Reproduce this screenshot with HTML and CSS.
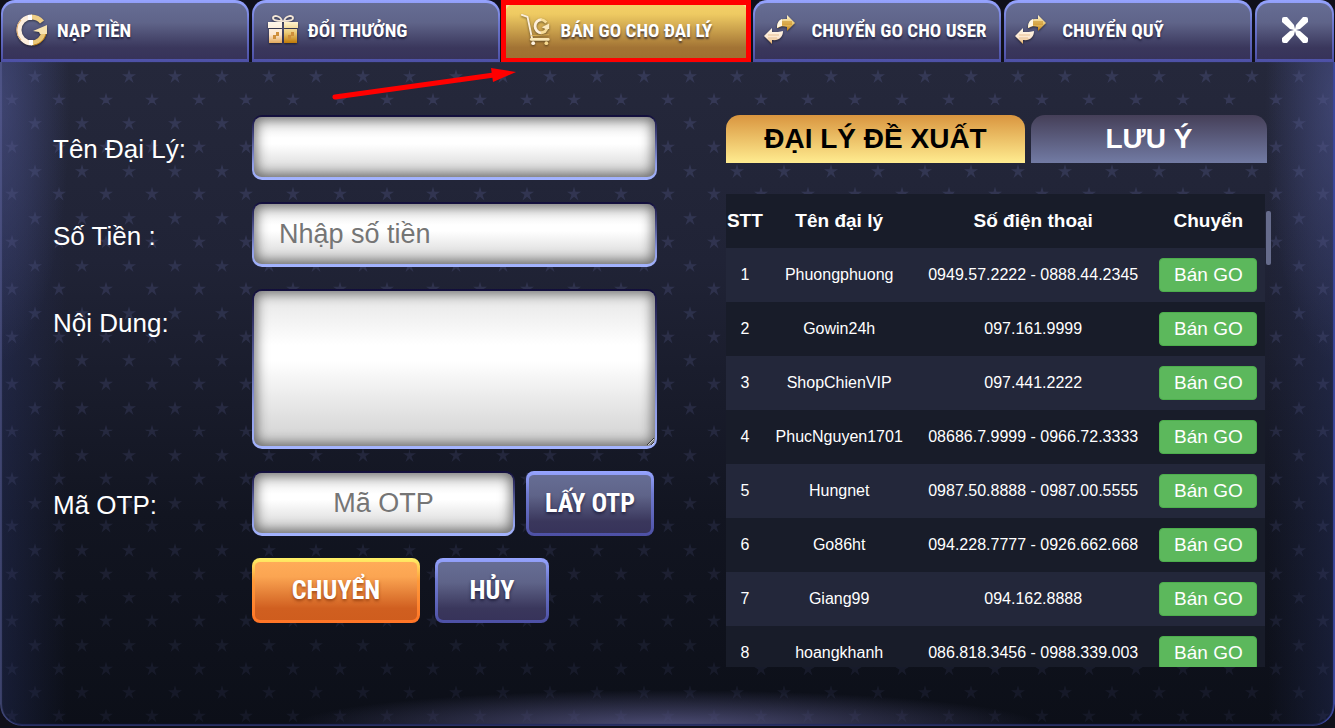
FILE: index.html
```html
<!DOCTYPE html>
<html lang="vi">
<head>
    <meta charset="UTF-8">
    <meta name="viewport" content="width=device-width, initial-scale=1.0">
    <title>Bán GO cho đại lý</title>
    <link rel="stylesheet" href="styles.css">
</head>
<body>
    <!-- shared gradients and icons -->
    <svg class="defs" width="0" height="0" aria-hidden="true">
        <defs>
            <linearGradient id="gold-right" x1="0" y1="0" x2="0" y2="1">
                <stop offset="0" stop-color="#fff3cf"/>
                <stop offset="0.5" stop-color="#eccb78"/>
                <stop offset="1" stop-color="#c07a08"/>
            </linearGradient>
            <linearGradient id="gold-left" x1="0" y1="0" x2="0" y2="1">
                <stop offset="0" stop-color="#fff8ea"/>
                <stop offset="0.6" stop-color="#fbe6cf"/>
                <stop offset="1" stop-color="#e2a95c"/>
            </linearGradient>
        </defs>
        <symbol id="icon-exchange" viewBox="0 0 32 30">
            <path fill="url(#gold-right)" d="M23 0l8 8-8 8v-4c-4-1-6-1-9 1h-1c0-5 2-9 7-9h3z"/>
            <path d="M18 7h10M18 9h10" stroke="#c58a22" stroke-width="1" fill="none"/>
            <path d="M18 4c-3 1-5 4-5 9 2-1 3-2 5-2z" fill="#fff8e6"/>
            <path fill="url(#gold-left)" d="M8 13L0 21l8 8v-4c7 1 11-3 11-9-3 1-7 1-11 1z"/>
            <path d="M4 20h11M4 23h9" stroke="#e6bf94" stroke-width="1" fill="none"/>
        </symbol>
    </svg>

    <nav class="tabs">
        <a class="tab" href="#nap-tien">
            <svg class="icon" viewBox="0 0 32 32">
                <path d="M16 29a13 13 0 0 1 0-26" stroke="#fdeedd" stroke-width="5" fill="none"/>
                <path d="M5 6a14 14 0 0 0 0 20" stroke="#dca76a" stroke-width="1" fill="none"/>
                <path d="M15 3c4 0 8 1 11 5" stroke="#f0cf86" stroke-width="5" fill="none"/>
                <path d="M28 18c-1 6-6 11-13 11" stroke="#eac778" stroke-width="5" fill="none"/>
                <path d="M30 20c-2 6-6 10-12 11" stroke="#b97a10" stroke-width="1" fill="none"/>
                <path fill="#f8e3b0" d="M17 17l14-6v9h-7l-1-2z"/>
                <path fill="#fff" d="M12 1h4v5h-4zM13 26h4v5h-4z"/>
            </svg>
            <span>NẠP TIỀN</span>
        </a>
        <a class="tab" href="#doi-thuong">
            <svg class="icon" viewBox="0 0 32 30">
                <path d="M15 6C13 0 6 0 6 3s5 3 9 3zM17 6c2-6 9-6 9-3s-5 3-9 3z" fill="none" stroke="#f2e5d6" stroke-width="2"/>
                <path fill="url(#gold-left)" d="M1 7h14v6H1zM2 14h13v14H2z"/>
                <path fill="url(#gold-right)" d="M17 7h14v6H17zM17 14h13v14H17z"/>
                <path d="M6 24v-4h3v-3h3v4H9v3zM21 24v-4h3v-3h3v4h-3v3z" fill="#cf8f3b"/>
            </svg>
            <span>ĐỔI THƯỞNG</span>
        </a>
        <a class="tab active" href="#ban-go">
            <svg class="icon" viewBox="0 0 32 34">
                <path d="M1 1l6 2 5 24" fill="none" stroke="#fbeedb" stroke-width="2" stroke-linecap="round" stroke-linejoin="round"/>
                <path d="M11 27h18" fill="none" stroke="#fbe7b4" stroke-width="3" stroke-linecap="round"/>
                <path d="M22 20a7 7 0 0 1 0-14" fill="none" stroke="#fff0dc" stroke-width="3"/>
                <path d="M21 6c3 0 4 1 6 3M28 14c-1 4-3 6-7 6" fill="none" stroke="#f8dd98" stroke-width="3"/>
                <path d="M22 14l8-4v6h-4z" fill="#fbe9bd"/>
                <path d="M11 23l19-1" stroke="#e0b356" stroke-width="1"/>
                <circle cx="13" cy="31" r="2" fill="#fff4e2"/>
                <circle cx="27" cy="31" r="2" fill="#f6d98e"/>
            </svg>
            <span>BÁN GO CHO ĐẠI LÝ</span>
        </a>
        <a class="tab wide" href="#chuyen-user">
            <svg class="icon"><use href="#icon-exchange"/></svg>
            <span>CHUYỂN GO CHO USER</span>
        </a>
        <a class="tab wide" href="#chuyen-quy">
            <svg class="icon"><use href="#icon-exchange"/></svg>
            <span>CHUYỂN QUỸ</span>
        </a>
        <button class="tab close" type="button" aria-label="Đóng">
            <svg viewBox="0 0 28 28" width="28" height="28">
                <path fill="#fff" d="M1 3q0-2 2-2h3l7 8 1 4 1-4 7-8h3q2 0 2 2v3l-8 7-4 1 4 1 8 7v3q0 2-2 2h-3l-7-8-1-4-1 4-7 8H3q-2 0-2-2v-3l8-7 4-1-4-1-8-7z"/>
            </svg>
        </button>
    </nav>

    <main class="panel">
        <form class="form">
            <label for="agent">Tên Đại Lý:</label>
            <input class="field" type="text" id="agent">

            <label for="amount">Số Tiền :</label>
            <input class="field" type="text" id="amount" placeholder="Nhập số tiền">

            <label for="content">Nội Dung:</label>
            <textarea class="field" id="content"></textarea>

            <label for="otp">Mã OTP:</label>
            <div class="otp-row">
                <input class="field otp" type="text" id="otp" placeholder="Mã OTP">
                <button class="btn" type="button">LẤY OTP</button>
            </div>

            <div class="actions">
                <button class="btn btn-submit" type="submit">CHUYỂN</button>
                <button class="btn btn-cancel" type="reset">HỦY</button>
            </div>
        </form>

        <section class="agents">
            <div class="agent-tabs">
                <button class="agent-tab active" type="button">ĐẠI LÝ ĐỀ XUẤT</button>
                <button class="agent-tab" type="button">LƯU Ý</button>
            </div>
            <div class="agent-list">
                <div class="table-wrap">
                    <table>
                        <colgroup>
                            <col class="col-stt">
                            <col class="col-name">
                            <col class="col-phone">
                            <col class="col-action">
                        </colgroup>
                        <thead>
                            <tr><th>STT</th><th>Tên đại lý</th><th>Số điện thoại</th><th>Chuyển</th></tr>
                        </thead>
                        <tbody>
                            <tr><td>1</td><td>Phuongphuong</td><td>0949.57.2222 - 0888.44.2345</td><td><button class="sell" type="button">Bán GO</button></td></tr>
                            <tr><td>2</td><td>Gowin24h</td><td>097.161.9999</td><td><button class="sell" type="button">Bán GO</button></td></tr>
                            <tr><td>3</td><td>ShopChienVIP</td><td>097.441.2222</td><td><button class="sell" type="button">Bán GO</button></td></tr>
                            <tr><td>4</td><td>PhucNguyen1701</td><td>08686.7.9999 - 0966.72.3333</td><td><button class="sell" type="button">Bán GO</button></td></tr>
                            <tr><td>5</td><td>Hungnet</td><td>0987.50.8888 - 0987.00.5555</td><td><button class="sell" type="button">Bán GO</button></td></tr>
                            <tr><td>6</td><td>Go86ht</td><td>094.228.7777 - 0926.662.668</td><td><button class="sell" type="button">Bán GO</button></td></tr>
                            <tr><td>7</td><td>Giang99</td><td>094.162.8888</td><td><button class="sell" type="button">Bán GO</button></td></tr>
                            <tr><td>8</td><td>hoangkhanh</td><td>086.818.3456 - 0988.339.003</td><td><button class="sell" type="button">Bán GO</button></td></tr>
                        </tbody>
                    </table>
                </div>
                <div class="scroll-thumb"></div>
            </div>
        </section>
    </main>

    <!-- arrow pointing at the active tab -->
    <svg class="arrow" viewBox="0 0 184 36" width="184" height="36" aria-hidden="true">
        <path d="M3 31L162 9" stroke="#f00" stroke-width="5" stroke-linecap="round"/>
        <path d="M159 2l25 4-23 10z" fill="#f00"/>
    </svg>
</body>
</html>
```
FILE: styles.css
```css
:root {
    --font: "Liberation Sans", Arial, sans-serif;
    --font-narrow: "Liberation Sans Narrow", "Arial Narrow", "Roboto Condensed", "Liberation Sans", sans-serif;
    --steel: linear-gradient(#666d94, #5f6489 35%, #3a375c 80%, #37335a);
    --steel-edge: linear-gradient(#96a4ff, #6f7ad0 35%, #4d50a5);
}

* {
    box-sizing: border-box;
}

body {
    margin: 0;
    min-height: 100vh;
    display: flex;
    flex-direction: column;
    position: relative;
    padding-bottom: 2px;
    background: #10101a;
    color: #fff;
    font-family: var(--font);
}

button {
    cursor: pointer;
}

.defs {
    position: absolute;
}

/* top tabs */
.tabs {
    display: grid;
    grid-template-columns: repeat(5, minmax(0, 1fr)) 79px;
    gap: 3px;
    padding: 0 1px;
}

.tab {
    height: 62px;
    display: flex;
    align-items: center;
    gap: 9px;
    padding: 0 0 2px 13px;
    border: solid transparent;
    border-width: 3px 2px;
    border-radius: 14px 14px 0 0;
    background: var(--steel) padding-box, var(--steel-edge) border-box;
    color: #fff;
    font: bold 19px var(--font-narrow);
    text-decoration: none;
    text-shadow: 0 2px 2px rgba(20, 18, 45, 0.7);
    white-space: nowrap;
}

.tab .icon {
    flex: none;
    width: 32px;
    height: 32px;
    filter: drop-shadow(0 1px 1px rgba(0, 0, 0, 0.5));
}

.tab.wide {
    padding-left: 9px;
    gap: 15px;
}

.tab.active {
    position: relative;
    padding-left: 15px;
    background: linear-gradient(#f4d168, #eeca62 20%, #a27334 80%, #9f7031) padding-box, linear-gradient(#ffe9a0, #c7934a) border-box;
}

.tab.active::after {
    content: "";
    position: absolute;
    inset: -3px -3px -4px -4px;
    border: 5px solid #f00;
}

.tab.close {
    justify-content: center;
    padding: 0 0 2px;
}

/* panel */
.panel {
    flex: 1;
    position: relative;
    display: grid;
    grid-template-columns: 604fr 545fr;
    gap: 69px;
    align-items: start;
    padding: 53px 64px 32px 53px;
    border-radius: 0 0 22px 22px;
    background:
        radial-gradient(ellipse 28% 36px at 50% 100%, rgba(120, 118, 180, 0.6), transparent),
        radial-gradient(ellipse 70px 260px at 0 40px, rgba(80, 86, 140, 0.55), transparent),
        radial-gradient(ellipse 70px 260px at 100% 40px, rgba(80, 86, 140, 0.55), transparent),
        linear-gradient(90deg, rgba(48, 60, 120, 0.3), transparent 5%, transparent 95%, rgba(48, 60, 120, 0.3)),
        linear-gradient(#25283b, #202336 30%, #121521 68%, #0c0f18);
    box-shadow: inset 2px 0 1px rgba(98, 104, 160, 0.5), inset -2px 0 1px #3c479c, inset 0 -2px 1px #252c5e;
}

/* star pattern */
.panel::before {
    content: "";
    position: absolute;
    inset: 0;
    border-radius: inherit;
    background-image: url("data:image/svg+xml,%3Csvg xmlns='http://www.w3.org/2000/svg' viewBox='0 0 94 94' preserveAspectRatio='none'%3E%3Cpath fill='%23565b8c' d='M70 14l3 10h11l-9 6 4 11-9-7-9 7 4-11-9-6h11zM24 60l3 10h11l-9 6 4 11-9-7-9 7 4-11-9-6h11z'/%3E%3C/svg%3E");
    background-size: calc(100% / 28.5) calc(100% / 14);
    -webkit-mask-image: linear-gradient(rgba(0, 0, 0, 0.34), rgba(0, 0, 0, 0.28) 40%, rgba(0, 0, 0, 0.12));
    mask-image: linear-gradient(rgba(0, 0, 0, 0.34), rgba(0, 0, 0, 0.28) 40%, rgba(0, 0, 0, 0.12));
}

.form,
.agents {
    position: relative;
    min-width: 0;
}

/* transfer form */
.form {
    display: grid;
    grid-template-columns: 199px 1fr;
    row-gap: 22px;
}

.form label {
    padding-top: 18px;
    font-size: 26px;
    line-height: 32px;
}

.field {
    display: block;
    width: 100%;
    height: 65px;
    padding: 0 25px;
    border: solid transparent;
    border-width: 2px 2px 3px;
    border-radius: 10px;
    background: linear-gradient(#e4e4e4, #fff 35%, #fff 45%, #d0d0d0) padding-box, linear-gradient(#110d3a, #8f9ce6 75%, #a4b4ff) border-box;
    box-shadow: inset 0 0 12px 3px rgba(0, 0, 0, 0.5);
    color: #333;
    font: 27px var(--font);
}

.field::placeholder {
    color: #757575;
}

textarea.field {
    height: 160px;
    padding: 16px 25px;
    resize: both;
}

.otp-row {
    display: flex;
    gap: 11px;
    padding-right: 3px;
}

.otp {
    flex: 1;
    min-width: 0;
    text-align: center;
}

.btn {
    flex: none;
    width: 128px;
    height: 65px;
    padding: 0 0 2px;
    border: solid transparent;
    border-width: 4px 3px 3px;
    border-radius: 8px;
    background: var(--steel) padding-box, var(--steel-edge) border-box;
    color: #fff;
    font: bold 26px var(--font-narrow);
    text-shadow: 0 2px 3px rgba(20, 18, 45, 0.7);
}

.actions {
    grid-column: 2;
    display: flex;
    gap: 15px;
}

.btn-submit {
    width: 168px;
    background: linear-gradient(#ffac58, #fba552 25%, #d05f20 80%, #cf5d1e) padding-box, linear-gradient(#fff268, #ff9a3a 35%, #ff7426) border-box;
    text-shadow: 0 2px 3px rgba(120, 40, 0, 0.6);
}

.btn-cancel {
    width: 114px;
}

/* agent list */
.agent-tabs {
    display: flex;
    gap: 6px;
    padding-right: 4px;
    margin-bottom: 31px;
}

.agent-tab {
    flex: 236;
    height: 48px;
    padding: 0;
    border: 0;
    border-radius: 14px 14px 0 0;
    background: linear-gradient(#453f58, #727ba4);
    color: #fff;
    font: bold 28px var(--font);
}

.agent-tab.active {
    flex: 299;
    background: linear-gradient(#d9953f, #ffec90);
    color: #000;
}

.agent-list {
    display: flex;
    gap: 1px;
}

.table-wrap {
    flex: 1;
    max-height: 473px;
    overflow: hidden;
}

table {
    width: 100%;
    table-layout: fixed;
    border-collapse: collapse;
    text-align: center;
    font-size: 16px;
}

.col-stt { width: 7%; }
.col-name { width: 28%; }
.col-phone { width: 44%; }
.col-action { width: 21%; }

tr {
    height: 54px;
    background: #181c29;
}

tbody tr:nth-child(odd) {
    background: #23273a;
}

th,
td {
    padding: 0;
    white-space: nowrap;
}

th {
    font-size: 19px;
}

.sell {
    width: 98px;
    height: 34px;
    padding: 0;
    border: 1px solid #4cae4c;
    border-radius: 4px;
    background: #5cb85c;
    color: #fff;
    font: 19px var(--font);
    vertical-align: middle;
}

.scroll-thumb {
    width: 5px;
    height: 54px;
    margin-top: 17px;
    border-radius: 2px;
    background: #666c8c;
}

.arrow {
    position: absolute;
    top: 66px;
    left: 332px;
    fill: none;
    pointer-events: none;
}

@media (max-width: 900px) {
    .tabs {
        grid-template-columns: 1fr 1fr;
    }

    .panel {
        grid-template-columns: 1fr;
        padding: 24px;
    }

    .arrow {
        display: none;
    }
}
```
